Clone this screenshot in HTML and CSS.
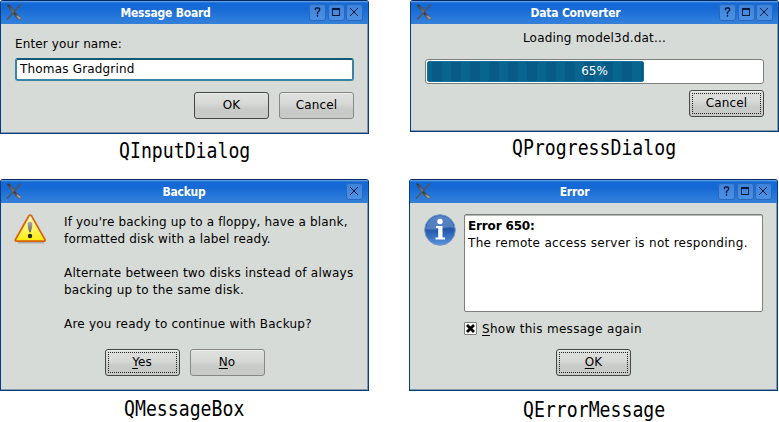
FILE: index.html
```html
<!DOCTYPE html>
<html lang="en">
<head>
<meta charset="utf-8">
<title>Qt dialogs</title>
<link rel="stylesheet" href="styles.css">
</head>
<body>
<svg class="defs" width="0" height="0">
  <defs>
    <linearGradient id="metal" x1="0" y1="0" x2="1" y2="1"><stop offset="0" stop-color="#333"/><stop offset=".45" stop-color="#777"/><stop offset=".55" stop-color="#3a3634"/><stop offset="1" stop-color="#aaa"/></linearGradient>
    <linearGradient id="warn" x1="0" y1="0" x2="0" y2="1"><stop offset="0" stop-color="#fffbd0"/><stop offset=".6" stop-color="#fdf35a"/><stop offset="1" stop-color="#ffee00"/></linearGradient>
    <linearGradient id="mark" x1="0" y1="0" x2="0" y2="1"><stop offset="0" stop-color="#aaa"/><stop offset="1" stop-color="#666"/></linearGradient>
    <linearGradient id="info" x1="0" y1="0" x2="0" y2="1"><stop offset="0" stop-color="#2b63b4"/><stop offset=".5" stop-color="#2258ab"/><stop offset="1" stop-color="#5a93dc"/></linearGradient>
    <symbol id="app" viewBox="0 0 16 16">
      <path d="M15 .5 9 7 1 15.5" fill="none" stroke="#5b534d" stroke-width="1.400"/>
      <path d="M1 1c2-.6 3.600.4 4.500 2L9 8.500l3.500 3 3 2.500-.8 1.500c-2 .3-3.700-.5-4.500-2L7 9 3.500 5z" fill="url(#metal)" stroke="#444" stroke-width=".4"/>
      <path d="m11 12 3 2.200" stroke="#aaa"/>
    </symbol>
    <symbol id="help" viewBox="0 0 17 17"><path d="M6 4h1v2H6zM7 3.500h3v1H7zM10 4h1v3h-1zM9 7h1v1H9zM8 8h1v2H8zM8 11h1v1.500H8z" fill="#061a38" stroke="#061a38" stroke-width=".4"/></symbol>
    <symbol id="max" viewBox="0 0 17 17"><path d="M4 4h8v8H4zM5 6v5h6V6z" fill="#061a38" fill-rule="evenodd"/></symbol>
    <symbol id="close" viewBox="0 0 17 17"><path d="m4 4 8 8M12 4l-8 8" stroke="#061a38" stroke-width="1" fill="none"/></symbol>
  </defs>
</svg>
<main class="board">
  <figure class="cell input">
    <section class="dialog">
      <header class="bar"><svg class="app"><use href="#app"/></svg><h2>Message Board</h2><div class="tools"><svg><use href="#help"/></svg><svg><use href="#max"/></svg><svg><use href="#close"/></svg></div></header>
      <div class="body">
        <label class="prompt">Enter your name:</label>
        <div class="field">Thomas Gradgrind</div>
        <div class="buttons end"><button class="default">OK</button><button>Cancel</button></div>
      </div>
    </section>
    <figcaption><span>QInputDialog</span></figcaption>
  </figure>

  <figure class="cell progress">
    <section class="dialog">
      <header class="bar"><svg class="app"><use href="#app"/></svg><h2>Data Converter</h2><div class="tools"><svg><use href="#help"/></svg><svg><use href="#max"/></svg><svg><use href="#close"/></svg></div></header>
      <div class="body">
        <p class="loading">Loading model3d.dat...</p>
        <div class="meter"><div class="fill"></div><span class="percent">65%</span></div>
        <div class="buttons end"><button class="focus">Cancel</button></div>
      </div>
    </section>
    <figcaption><span>QProgressDialog</span></figcaption>
  </figure>

  <figure class="cell message">
    <section class="dialog">
      <header class="bar"><svg class="app"><use href="#app"/></svg><h2>Backup</h2><div class="tools"><svg><use href="#close"/></svg></div></header>
      <div class="body">
        <div class="row">
          <svg class="icon" viewBox="0 0 32 32">
            <path d="M4 28.500h26" stroke="#8d918e" stroke-width="2" opacity=".6"/>
            <path d="M15 1.500c.7-.7 1.700-.7 2.300 0L31 25.500c.3 1-.1 1.700-1 1.700H2.500c-1 0-1.500-.7-1-1.700z" fill="url(#warn)" stroke="#d9600f" stroke-width="1.700"/>
            <path d="M13.600 9.500c.3-2.300 4.500-2.300 4.800 0 .1 3-1 6-1.600 8.700h-1.600c-.6-2.700-1.700-5.700-1.600-8.700z" fill="url(#mark)"/>
            <circle cx="16" cy="22" r="2.200" fill="#272727"/>
          </svg>
          <div class="copy">
            <p><span class="l1">If you're backing up to a floppy, have a blank,</span><br><span class="l1">formatted disk with a label ready.</span></p>
            <p><span class="l2">Alternate between two disks instead of always</span><br><span class="l2">backing up to the same disk.</span></p>
            <p><span class="l2">Are you ready to continue with Backup?</span></p>
          </div>
        </div>
        <div class="buttons middle"><button class="focus"><u>Y</u>es</button><button><u>N</u>o</button></div>
      </div>
    </section>
    <figcaption><span>QMessageBox</span></figcaption>
  </figure>

  <figure class="cell error">
    <section class="dialog">
      <header class="bar"><svg class="app"><use href="#app"/></svg><h2>Error</h2><div class="tools"><svg><use href="#help"/></svg><svg><use href="#max"/></svg><svg><use href="#close"/></svg></div></header>
      <div class="body">
        <div class="row">
          <svg class="icon" viewBox="0 0 32 32">
            <circle cx="16" cy="16" r="15.300" fill="url(#info)" stroke="#7797c5"/>
            <path d="M2 15C3 6 9 2 16 2s13 4 14 12c-7-3-19 4-28 1z" fill="#fff" opacity=".22"/>
            <circle cx="16" cy="7.500" r="2.700" fill="#fff"/>
            <path d="M12 12h6.500v11.500H21v2H11.500v-2h2.700V14H12z" fill="#fff"/>
          </svg>
          <div class="output"><b>Error 650:</b><br><span>The remote access server is not responding.</span></div>
        </div>
        <label class="check"><svg viewBox="0 0 13 13"><rect x=".5" y=".5" width="12" height="12" rx=".5" fill="#fff" stroke="#7f827f"/><path d="m3 3 7 7M10 3l-7 7" stroke="#000" stroke-width="2.800"/></svg><span><u>S</u>how this message again</span></label>
        <div class="buttons middle"><button class="focus"><u>O</u>K</button></div>
      </div>
    </section>
    <figcaption><span>QErrorMessage</span></figcaption>
  </figure>
</main>
</body>
</html>
```
FILE: styles.css
```css
* { box-sizing: border-box; }
body { margin: 0; background: #fff; color: #000; font: 12px/17px "DejaVu Sans", sans-serif; overflow: hidden; }
.defs { display: block; height: 0; }
.board { display: grid; grid-template-columns: 409px 370px; grid-template-rows: 179px 243px; width: 779px; height: 422px; }
.cell { margin: 0; width: 369px; }
.progress { margin-left: 1px; }
.dialog { display: flex; flex-direction: column; width: 369px; border: 1px solid #073d7b; border-top-color: #032c66; border-radius: 3px 3px 0 0; background: #d7dbd7; box-shadow: inset -1px -1px #8499ae, inset 1px 0 #c8d8e5; overflow: hidden; }
.input .dialog { height: 134px; }
.progress .dialog { height: 132px; }
.message .dialog, .error .dialog { height: 212px; }
.bar { display: grid; grid-template-columns: 16px 1fr auto; flex: none; height: 23px; padding: 0 5px; background: linear-gradient(#72a6e7 0, #458bdd 1px, #1069d8 2px, #1769d4 8px, #2879dc 17px, #3580d8 23px); }
.app { width: 16px; height: 16px; margin-top: 3px; }
.bar h2 { margin: 4px 0 0; color: #fff; text-align: center; font: bold 12px/17px "DejaVu Sans Condensed", "DejaVu Sans", sans-serif; font-stretch: condensed; letter-spacing: -.22px; white-space: nowrap; }
.tools { display: flex; justify-content: flex-end; gap: 1px; padding-top: 3px; }
.tools svg { width: 17px; height: 17px; background: linear-gradient(#3c82da, #4b91e5); border-radius: 3px; box-shadow: inset 0 0 0 1px #2869bd; }
.tools svg:nth-child(2) { margin-left: 1px; }
.body { flex: 1; padding: 0 14px; }
.prompt { display: block; padding-top: 12px; height: 34px; letter-spacing: .12px; }
.field { height: 23px; border: 2px solid #3685a4; border-top-color: #115a78; border-radius: 3px; background: #fff; padding: 1px 3px; letter-spacing: .18px; line-height: 16px; }
.buttons { display: flex; gap: 10px; }
.end { justify-content: flex-end; }
.input .buttons { margin-top: 11px; }
.middle { justify-content: center; }
button { width: 75px; height: 27px; padding: 0 0 1px; border: 1px solid #858885; border-radius: 3px; background: linear-gradient(#dfe1df, #d8dad8 40%, #c8cac8 65%, #c9cbc9); color: #000; font: 12px/17px "DejaVu Sans", sans-serif; letter-spacing: .1px; box-shadow: inset 0 1px #eceeec; }
.default, .focus { border-color: #444844; }
.focus { outline: 1px dotted #222; outline-offset: -4px; }
u { text-decoration-thickness: 1px; text-underline-offset: 2px; }
.loading { margin: 0; height: 35px; padding-top: 6px; text-align: center; letter-spacing: .2px; }
.meter { display: grid; height: 25px; border: 1px solid #7c7f7c; border-radius: 3px; background: #fff; padding: 1px; }
.meter > * { grid-area: 1 / 1; }
.fill { width: 217px; height: 21px; border-radius: 2px; border: 1px solid #16709a; background: repeating-linear-gradient(90deg, #086590 0 4px, #075b86 4px 14px, #086590 14px 19px); }
.percent { color: #fff; text-align: center; line-height: 20px; }
.progress .buttons { margin-top: 6px; }
.row { display: flex; }
.icon { flex: none; width: 32px; height: 32px; }
.message .row { height: 146px; padding-top: 11px; }
.message .icon { margin-left: -1px; }
.copy { margin-left: 18px; white-space: nowrap; }
.copy p { margin: 0 0 17px; }
.l1 { letter-spacing: .17px; }
.l2 { letter-spacing: .22px; }
.error .row { height: 109px; padding-top: 11px; }
.output { width: 299px; height: 98px; margin-left: 8px; padding: 3px 3px; border: 1px solid #7c7f7c; border-radius: 2px; background: #fff; white-space: nowrap; box-shadow: inset 0 1px #b5b8b5; }
.output b { letter-spacing: -.15px; }
.output span { letter-spacing: .3px; }
.check { display: flex; gap: 5px; height: 37px; padding: 10px 0 0 40px; margin-bottom: 0; }
.check svg { width: 13px; height: 13px; }
.check span { margin-top: -1px; letter-spacing: .3px; }
figcaption { font: 22px/26px "DejaVu Sans Mono", monospace; white-space: nowrap; }
figcaption span { display: inline-block; transform: scaleX(.826); transform-origin: 0 0; }
.input figcaption { padding: 4px 0 0 119px; }
.progress figcaption { padding: 3px 0 0 102px; }
.message figcaption { padding: 5px 0 0 124px; }
.error figcaption { padding: 6px 0 0 114px; }
```
